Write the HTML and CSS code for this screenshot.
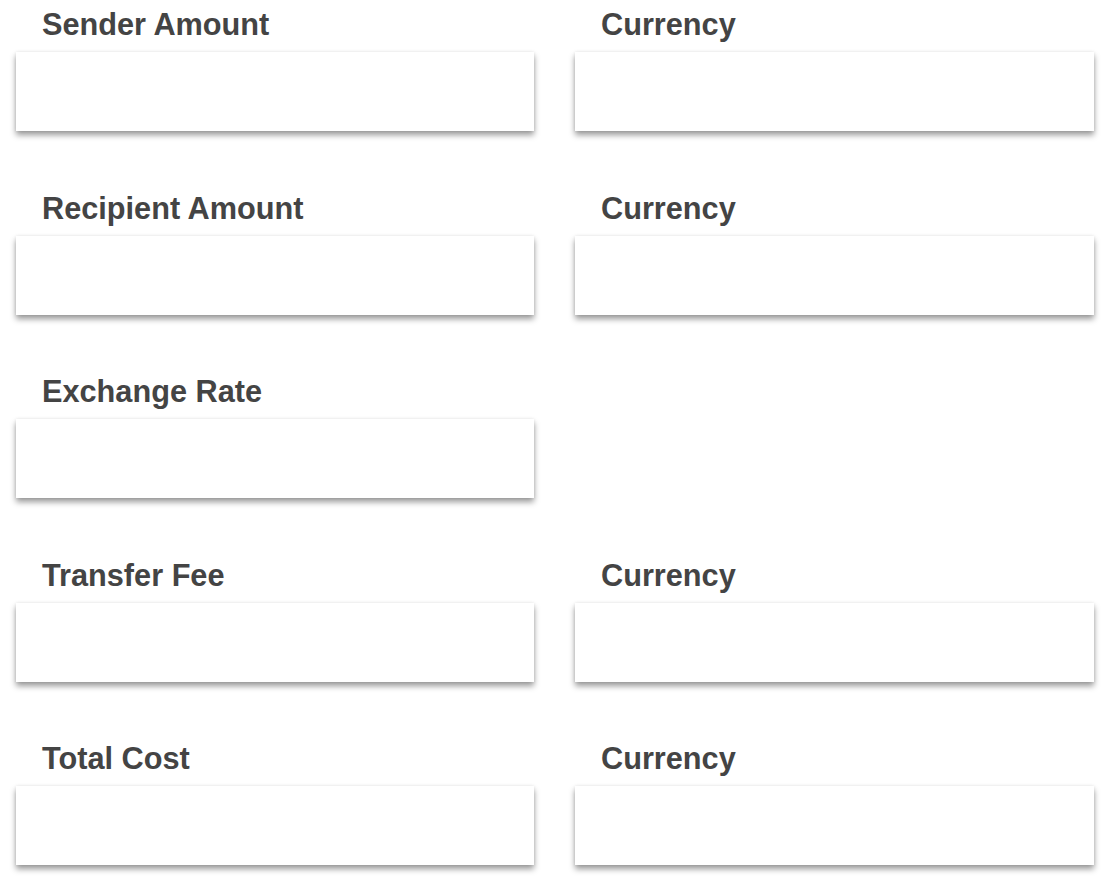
FILE: index.html
```html
<!DOCTYPE html>
<html lang="en">
<head>
<meta charset="utf-8">
<title>Transfer</title>
<link rel="stylesheet" href="styles.css">
</head>
<body>
<form class="form">
  <div class="field">
    <label class="label">Sender Amount</label>
    <div class="box"></div>
  </div>
  <div class="field">
    <label class="label">Currency</label>
    <div class="box"></div>
  </div>
  <div class="field">
    <label class="label">Recipient Amount</label>
    <div class="box"></div>
  </div>
  <div class="field">
    <label class="label">Currency</label>
    <div class="box"></div>
  </div>
  <div class="field">
    <label class="label">Exchange Rate</label>
    <div class="box"></div>
  </div>
  <div class="field empty"></div>
  <div class="field">
    <label class="label">Transfer Fee</label>
    <div class="box"></div>
  </div>
  <div class="field">
    <label class="label">Currency</label>
    <div class="box"></div>
  </div>
  <div class="field">
    <label class="label">Total Cost</label>
    <div class="box"></div>
  </div>
  <div class="field">
    <label class="label">Currency</label>
    <div class="box"></div>
  </div>
</form>
</body>
</html>
```
FILE: styles.css
```css
html, body {
  margin: 0;
  padding: 0;
  background: #ffffff;
}
body {
  font-family: "Liberation Sans", Arial, sans-serif;
  min-height: 100vh;
}
.form {
  display: grid;
  grid-template-columns: minmax(0, 518fr) minmax(0, 519fr);
  column-gap: 41px;
  row-gap: 60.5px;
  padding: 8px 12px 12px 16px;
}
.field {
  display: flex;
  flex-direction: column;
}
.label {
  display: block;
  font-size: 30.7px;
  line-height: 34px;
  font-weight: bold;
  color: #444444;
  padding-left: 26px;
  margin-bottom: 10px;
}
.box {
  height: 79px;
  background: #ffffff;
  box-shadow: 0 4px 6px rgba(0, 0, 0, 0.4), 0 0 3px rgba(0, 0, 0, 0.08);
}
```
